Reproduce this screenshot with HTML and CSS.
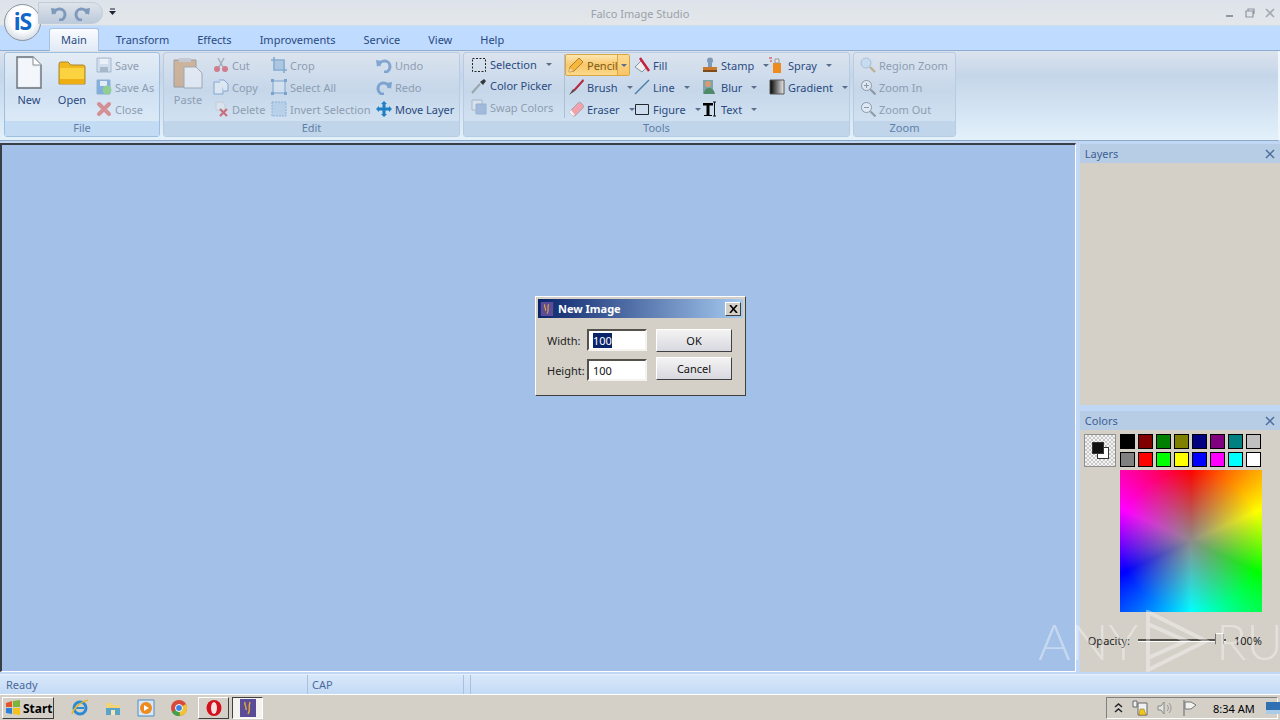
FILE: index.html
```html
<!DOCTYPE html>
<html lang="en">
<head>
  <meta charset="UTF-8" />
  <title>Falco Image Studio</title>
  <link rel="stylesheet" href="styles.css">
</head>
<body>
  <div class="window">
    <div class="titlebar">
      <span class="title-text">Falco Image Studio</span>
      <div class="win-btns">
        <svg width="12" height="12" viewBox="0 0 12 12"><path d="M2 9h7" stroke="#8f979f" stroke-width="2"/></svg>
        <svg width="12" height="12" viewBox="0 0 12 12"><path d="M2 4h7v6H2zM4 4V2h6v5" fill="none" stroke="#8f979f" stroke-width="1.2"/></svg>
        <svg width="12" height="12" viewBox="0 0 12 12"><path d="M2 2l8 8M10 2l-8 8" stroke="#a3aab1" stroke-width="1.6"/></svg>
      </div>
    </div>

    <div class="tabs">
      <span class="tab active">Main</span>
      <span class="tab">Transform</span>
      <span class="tab">Effects</span>
      <span class="tab">Improvements</span>
      <span class="tab">Service</span>
      <span class="tab">View</span>
      <span class="tab">Help</span>
    </div>

    <div class="ribbon">
      <section class="group file-group">
        <div class="group-body">
          <div class="large">
            <svg width="28" height="34" viewBox="0 0 28 34"><path d="M2 1h16l8 8v23H2z" fill="#e9eff6" stroke="#6b7078" stroke-width="1.4"/><path d="M18 1v8h8" fill="#fff" stroke="#8b9097"/><path d="M4 3h13v8h7v19H4z" fill="#f3f6fa"/></svg>
            <span>New</span>
          </div>
          <div class="large">
            <svg width="28" height="28" viewBox="0 0 28 28"><path d="M1 5a2 2 0 0 1 2-2h7l3 3h12a2 2 0 0 1 2 2v17H1z" fill="#f1b91d" stroke="#a9882f"/><path d="M2 9h24v15H2z" fill="#fbd23f"/><path d="M2 20h24v5H2z" fill="#efae12"/></svg>
            <span>Open</span>
          </div>
          <div class="col col-file off">
            <div class="item"><svg class="ic" viewBox="0 0 16 16"><path d="M1 1h14v14H1z" fill="#c8d6e8" stroke="#7e93ae"/><path d="M4 2h8v5H4z" fill="#f4f7fa"/><path d="M4 10h8v5H4z" fill="#7e93ae"/></svg><span>Save</span></div>
            <div class="item"><svg class="ic" viewBox="0 0 16 16"><path d="M1 1h13v14H1z" fill="#3f86cf" stroke="#5d84b3"/><path d="M4 2h7v5H4z" fill="#eef4fa"/><circle cx="11" cy="11" r="4.5" fill="#5cc048"/></svg><span>Save As</span></div>
            <div class="item"><svg class="ic" viewBox="0 0 16 16"><path d="M3 3l10 10M13 3L3 13" stroke="#d34a4a" stroke-width="4" stroke-linecap="round"/></svg><span>Close</span></div>
          </div>
        </div>
        <div class="group-label">File</div>
      </section>

      <section class="group edit-group">
        <div class="group-body">
          <div class="large off">
            <svg width="30" height="32" viewBox="0 0 30 32"><path d="M1 3h22v27H1z" fill="#c9905a" stroke="#6f6a63"/><path d="M6 1h12v4H6z" fill="#b4b9bf"/><path d="M11 10h12l6 6v15H11z" fill="#eef3f8" stroke="#7b8088"/></svg>
            <span>Paste</span>
          </div>
          <div class="col col-cut off">
            <div class="item"><svg class="ic" viewBox="0 0 16 16"><path d="M5 1l5 9M11 1L6 10" stroke="#7c8a99" stroke-width="1.5"/><circle cx="4" cy="12" r="3" fill="#d02f3c"/><circle cx="12" cy="12" r="3" fill="#d02f3c"/></svg><span>Cut</span></div>
            <div class="item"><svg class="ic" viewBox="0 0 16 16"><path d="M1 3h6l3 3v9H1z" fill="#eef3f8" stroke="#4d7dbd"/><path d="M6 1h5l4 4v7h-4" fill="#eef3f8" stroke="#4d7dbd"/></svg><span>Copy</span></div>
            <div class="item"><svg class="ic" viewBox="0 0 16 16"><path d="M3 1h7l2 3v5H3z" fill="#e4e9ee" stroke="#b9c1c9"/><path d="M7 8l7 7M14 8l-7 7" stroke="#c9141c" stroke-width="2.2"/></svg><span>Delete</span></div>
          </div>
          <div class="col col-crop off">
            <div class="item"><svg class="ic" viewBox="0 0 16 16"><path d="M3 0v13h13M0 3h13v13" fill="none" stroke="#3f7fb8" stroke-width="1.6"/><path d="M4 4h8v8H4z" fill="#8db3d8"/></svg><span>Crop</span></div>
            <div class="item"><svg class="ic" viewBox="0 0 16 16"><path d="M2 2h12v12H2z" fill="#d9e7f4" stroke="#3d76b3"/><path d="M0 0h3v3H0zM13 0h3v3h-3zM0 13h3v3H0zM13 13h3v3h-3z" fill="#3d76b3"/></svg><span>Select All</span></div>
            <div class="item"><svg class="ic" viewBox="0 0 16 16"><path d="M1 1h14v14H1z" fill="#a9c6e6" stroke="#5c8fc5" stroke-dasharray="2 1"/></svg><span>Invert Selection</span></div>
          </div>
          <div class="col off-some">
            <div class="item dim"><svg class="ic" viewBox="0 0 16 16"><path d="M3 9a5.5 5.5 0 1 1 5 6" fill="none" stroke="#3f78b8" stroke-width="3"/><path d="M0 3l6 1-5 6z" fill="#3f78b8"/></svg><span>Undo</span></div>
            <div class="item dim"><svg class="ic" viewBox="0 0 16 16"><path d="M13 9a5.5 5.5 0 1 0-5 6" fill="none" stroke="#3f78b8" stroke-width="3"/><path d="M16 3l-6 1 5 6z" fill="#3f78b8"/></svg><span>Redo</span></div>
            <div class="item"><svg class="ic" viewBox="0 0 16 16"><path d="M8 0l3 3H9.500v3.500H13V5l3 3-3 3V9.500H9.500V13H11l-3 3-3-3h1.500V9.500H3V11L0 8l3-3v1.500h3.500V3H5z" fill="#1f7fc4"/></svg><span>Move Layer</span></div>
          </div>
        </div>
        <div class="group-label">Edit</div>
      </section>

      <section class="group tools-group">
        <div class="group-body">
          <div class="col col-select">
            <div class="item"><svg class="ic" viewBox="0 0 16 16"><path d="M1.500 1.500h13v13h-13z" fill="none" stroke="#222" stroke-dasharray="2 1.500"/></svg><span>Selection</span><i class="caret"></i></div>
            <div class="item"><svg class="ic" viewBox="0 0 16 16"><path d="M1 15l8-9" stroke="#9aa3ab" stroke-width="2"/><path d="M9 4l3 3 3-4-2-2z" fill="#33383d"/></svg><span>Color Picker</span></div>
            <div class="item dim"><svg class="ic" viewBox="0 0 16 16"><path d="M1 1h10v10H1z" fill="#e4e8ec" stroke="#8f98a3"/><path d="M5 5h10v10H5z" fill="#7f9fcb" stroke="#6a8fc0"/></svg><span>Swap Colors</span></div>
          </div>
          <div class="col col-pencil">
            <div class="item selected">
              <svg class="ic" viewBox="0 0 16 16"><path d="M1 15l1-5L11 1l4 4-9 9z" fill="#f6b83c" stroke="#a0702a" stroke-width=".8"/><path d="M1 15l1-4 3 3z" fill="#f4dcb1"/></svg><span>Pencil</span><b class="split"><i class="caret"></i></b>
            </div>
            <div class="item"><svg class="ic" viewBox="0 0 16 16"><path d="M15 0L6 10l-1 1 2 1L16 2z" fill="#b5263a"/><path d="M1 16l4-6 2 2z" fill="#5b4a4a"/></svg><span>Brush</span><i class="caret"></i></div>
            <div class="item"><svg class="ic" viewBox="0 0 16 16"><path d="M1 11l9-9a2 2 0 0 1 3 0l2 2a2 2 0 0 1 0 3l-8 8H5z" fill="#f2a2ac" stroke="#a5a9ae"/><path d="M1 11l4 4 2-1-4-5z" fill="#f4f4f4"/></svg><span>Eraser</span><i class="caret"></i></div>
          </div>
          <div class="col col-fill">
            <div class="item"><svg class="ic" viewBox="0 0 16 16"><path d="M1 10l6-6 6 6-5 5z" fill="#eceff2" stroke="#8b929a"/><path d="M6 1l9 13" stroke="#c61f3a" stroke-width="2.400"/></svg><span>Fill</span></div>
            <div class="item"><svg class="ic" viewBox="0 0 16 16"><path d="M1 15L15 1" stroke="#4a7fa8" stroke-width="1.400"/></svg><span>Line</span><i class="caret"></i></div>
            <div class="item"><svg class="ic" viewBox="0 0 16 16"><path d="M1.500 3.500h13v10h-13z" fill="none" stroke="#22282e"/></svg><span>Figure</span><i class="caret"></i></div>
          </div>
          <div class="col col-stamp">
            <div class="item"><svg class="ic" viewBox="0 0 16 16"><circle cx="8" cy="3.500" r="3" fill="#7f99b8"/><path d="M6 6h4v4H6z" fill="#7f99b8"/><path d="M1 10h14v3H1z" fill="#cb7a2d"/><path d="M1 13h14v2H1z" fill="#7d4a1c"/></svg><span>Stamp</span><i class="caret"></i></div>
            <div class="item"><svg class="ic" viewBox="0 0 16 16"><path d="M1 1h10v14H1z" fill="#7da4a8"/><circle cx="6" cy="5" r="3" fill="#d99a72"/><path d="M2 15c0-5 3-6 5-6s5 1 6 6z" fill="#4f8a6a"/></svg><span>Blur</span><i class="caret"></i></div>
            <div class="item"><svg class="ic" viewBox="0 0 16 16"><path d="M1 2h10v2.500H7.500V14H10v1H2v-1h2.500V4.500H1z" fill="#000"/><path d="M11 1h3M12.500 1v14M11 15h3" stroke="#111" fill="none"/></svg><span>Text</span><i class="caret"></i></div>
          </div>
          <div class="col">
            <div class="item"><svg class="ic" viewBox="0 0 16 16"><path d="M4 6h8v10H4z" fill="#f08a1d"/><path d="M6 2h4v4H6z" fill="#e6e6e6" stroke="#999"/><path d="M0 1h3M1 4h2" stroke="#d0342c"/></svg><span>Spray</span><i class="caret"></i></div>
            <div class="item"><svg class="ic" viewBox="0 0 16 16"><defs><linearGradient id="grey-fade"><stop offset="0" stop-color="#000"/><stop offset="1" stop-color="#eee"/></linearGradient></defs><path d="M1 1h14v14H1z" fill="url(#grey-fade)" stroke="#555"/></svg><span>Gradient</span><i class="caret"></i></div>
          </div>
        </div>
        <div class="group-label">Tools</div>
      </section>

      <section class="group zoom-group">
        <div class="group-body">
          <div class="col off">
            <div class="item"><svg class="ic" viewBox="0 0 16 16"><circle cx="6" cy="6" r="5" fill="#bcd9f2" stroke="#7fa6c9"/><path d="M10 10l5 5" stroke="#b08a50" stroke-width="2.400"/></svg><span>Region Zoom</span></div>
            <div class="item"><svg class="ic" viewBox="0 0 16 16"><circle cx="6.500" cy="6.500" r="5" fill="#eef3f8" stroke="#59636e"/><path d="M4 6.500h5M6.500 4v5" stroke="#59636e"/><path d="M10.500 10.500l5 5" stroke="#59636e" stroke-width="2"/></svg><span>Zoom In</span></div>
            <div class="item"><svg class="ic" viewBox="0 0 16 16"><circle cx="6.500" cy="6.500" r="5" fill="#eef3f8" stroke="#59636e"/><path d="M4 6.500h5" stroke="#59636e"/><path d="M10.500 10.500l5 5" stroke="#59636e" stroke-width="2"/></svg><span>Zoom Out</span></div>
          </div>
        </div>
        <div class="group-label">Zoom</div>
      </section>
    </div>

    <div class="workspace">
      <div class="canvas"></div>
      <aside class="sidebar">
        <div class="panel layers-panel">
          <div class="panel-head"><span>Layers</span><svg width="10" height="10" viewBox="0 0 10 10"><path d="M1 1l8 8M9 1L1 9" stroke="#4d6f9b" stroke-width="1.500"/></svg></div>
          <div class="panel-body"></div>
        </div>
        <div class="panel colors-panel">
          <div class="panel-head"><span>Colors</span><svg width="10" height="10" viewBox="0 0 10 10"><path d="M1 1l8 8M9 1L1 9" stroke="#4d6f9b" stroke-width="1.500"/></svg></div>
          <div class="panel-body colors-body">
            <div class="color-top">
              <div class="preview"><i class="bg-swatch"></i><i class="fg-swatch"></i></div>
              <div class="color-main">
                <div class="palette">
                  <i class="swatch c-000"></i><i class="swatch c-800"></i><i class="swatch c-080"></i><i class="swatch c-880"></i><i class="swatch c-008"></i><i class="swatch c-808"></i><i class="swatch c-088"></i><i class="swatch c-ccc"></i>
                  <i class="swatch c-888"></i><i class="swatch c-f00"></i><i class="swatch c-0f0"></i><i class="swatch c-ff0"></i><i class="swatch c-00f"></i><i class="swatch c-f0f"></i><i class="swatch c-0ff"></i><i class="swatch c-fff"></i>
                </div>
                <div class="wheel"></div>
              </div>
            </div>
            <div class="opacity-row">
              <span>Opacity:</span>
              <div class="slider"><i class="thumb"></i></div>
              <span>100%</span>
            </div>
          </div>
        </div>
      </aside>
    </div>

    <div class="statusbar">
      <span class="cell cell-ready">Ready</span>
      <span class="cell cell-cap">CAP</span>
      <span class="cell"></span>
    </div>
  </div>

  <div class="taskbar">
    <button class="start-btn">
      <svg width="16" height="16" viewBox="0 0 16 16"><path d="M1 3l6-2v6H1z" fill="#e8542a"/><path d="M8 1l7-1v7H8z" fill="#7cb53a"/><path d="M1 8h6v6l-6-1z" fill="#2f80d8"/><path d="M8 8h7v7l-7-1z" fill="#f5c21c"/></svg>
      Start
    </button>
    <div class="quick">
      <svg width="18" height="18" viewBox="0 0 18 18"><circle cx="9" cy="9" r="6" fill="none" stroke="#2a8ad4" stroke-width="3"/><path d="M5 9h8" stroke="#2a8ad4" stroke-width="2"/><path d="M1 15C3 8 10 3 17 1" fill="none" stroke="#e6b52c" stroke-width="1.500"/></svg>
      <svg width="18" height="18" viewBox="0 0 18 18"><path d="M2 4h5l2 2h7v10H2z" fill="#f2d377"/><path d="M2 9h14v7H2z" fill="#5aa3c9"/><path d="M7 11h4v5H7z" fill="#f4e6b4"/></svg>
      <svg width="18" height="18" viewBox="0 0 18 18"><path d="M1 1h16v16H1z" fill="#d8e8f5" stroke="#4c8cc6"/><circle cx="9" cy="9" r="6" fill="#ee8a1e"/><path d="M7 6l5 3-5 3z" fill="#fff"/></svg>
      <svg width="18" height="18" viewBox="0 0 18 18"><circle cx="9" cy="9" r="8" fill="#d94a3a"/><path d="M9 9L2 13a8 8 0 0 0 8 4z" fill="#3fa34d"/><path d="M9 9l1 8a8 8 0 0 0 6-12z" fill="#f2c230"/><circle cx="9" cy="9" r="3.500" fill="#3f83e0" stroke="#fff"/></svg>
    </div>
    <div class="task-btn">
      <svg width="18" height="18" viewBox="0 0 18 18"><ellipse cx="9" cy="9" rx="7.500" ry="8" fill="#d5101c"/><ellipse cx="9" cy="9" rx="3" ry="6" fill="#f6e0e0"/></svg>
    </div>
    <div class="task-btn pressed">
      <svg width="16" height="18" viewBox="0 0 16 18"><path d="M0 0h16v18H0z" fill="#5a4c96"/><path d="M5 3c-1 4 2 4 1 8M10 3c-2 5 1 8-2 12" fill="none" stroke="#e0a73c" stroke-width="1.500"/></svg>
    </div>
    <div class="tray">
      <svg width="9" height="10" viewBox="0 0 9 10"><path d="M1 4l3.500-3L8 4M1 9l3.500-3L8 9" fill="none" stroke="#222" stroke-width="1.400"/></svg>
      <svg width="16" height="16" viewBox="0 0 16 16"><path d="M1 1h4v6H1zM6 3h9v12H6z" fill="#eef0f2" stroke="#666"/><path d="M8 9l4-0 2 6H7z" fill="#f0c51e" stroke="#8b6f0c" stroke-width=".5"/></svg>
      <svg width="16" height="16" viewBox="0 0 16 16"><path d="M1 6h3l3-4v12l-3-4H1z" fill="#e4e4e2" stroke="#888"/><path d="M10 5a4 4 0 0 1 0 6M12 3a7 7 0 0 1 0 10" fill="none" stroke="#999"/></svg>
      <svg width="16" height="16" viewBox="0 0 16 16"><path d="M2 0v16" stroke="#666"/><path d="M3 2h6l5 3-5 4H3z" fill="#f1f1ef" stroke="#777"/></svg>
      <span class="clock">8:34 AM</span>
      <svg class="show-desktop" width="15" height="12" viewBox="0 0 15 12"><path d="M0 0h15v12H0z" fill="#2f6fb4"/><path d="M0 8h15v4H0z" fill="#a9cbe8"/></svg>
    </div>
  </div>

  <!-- things on top of the window -->
  <div class="orb">iS</div>
  <div class="qat">
    <svg width="18" height="16" viewBox="0 0 16 16"><path d="M3 9a5.500 5.500 0 1 1 5 6" fill="none" stroke="#7d99bb" stroke-width="3"/><path d="M0 3l6 1-5 6z" fill="#7d99bb"/></svg>
    <svg width="18" height="16" viewBox="0 0 16 16"><path d="M13 9a5.500 5.500 0 1 0-5 6" fill="none" stroke="#7d99bb" stroke-width="3"/><path d="M16 3l-6 1 5 6z" fill="#7d99bb"/></svg>
  </div>
  <svg class="qat-menu" width="7" height="8" viewBox="0 0 7 8"><path d="M1 1h5" stroke="#223" /><path d="M0 3h7L3.500 7z" fill="#223"/></svg>

  <div class="dialog">
    <div class="dlg-title">
      <svg width="14" height="14" viewBox="0 0 16 18"><path d="M0 0h16v18H0z" fill="#5a4c96"/><path d="M5 3c-1 4 2 4 1 8M10 3c-2 5 1 8-2 12" fill="none" stroke="#e0a73c" stroke-width="1.500"/></svg>
      <span>New Image</span>
      <b class="dlg-close"><svg width="9" height="8" viewBox="0 0 9 8"><path d="M1 0l7 8M8 0L1 8" stroke="#000" stroke-width="1.600"/></svg></b>
    </div>
    <div class="dlg-body">
      <div class="dlg-fields">
        <label class="dlg-field"><span>Width:</span><div class="dlg-input"><mark>100</mark></div></label>
        <label class="dlg-field"><span>Height:</span><div class="dlg-input">100</div></label>
      </div>
      <div class="dlg-buttons">
        <button class="dlg-btn">OK</button>
        <button class="dlg-btn">Cancel</button>
      </div>
    </div>
  </div>

  <div class="watermark">
    <span>ANY</span>
    <svg width="70" height="62" viewBox="0 0 70 62"><path d="M6 2L64 31 6 60zM6 14l38 17L6 48" fill="none" stroke="#fff" stroke-width="4"/></svg>
    <span>RUN</span>
  </div>
</body>
</html>
```

FILE: styles.css
```css
* {
  box-sizing: border-box;
}
html, body {
  margin: 0;
  padding: 0;
}
body {
  width: 1280px;
  height: 720px;
  overflow: hidden;
  position: relative;
  font-family: "Noto Sans", "Open Sans", sans-serif;
  font-size: 11px;
  color: #2a4a7f;
  background: #d4d0c8;
}
svg {
  display: block;
  flex: none;
}

/* window */
.window {
  height: 694px;
  display: flex;
  flex-direction: column;
  background: #bfdbff;
}
.titlebar {
  height: 26px;
  display: flex;
  align-items: center;
  justify-content: center;
  position: relative;
  background: linear-gradient(#dde3ea, #e3e7ea);
  border-bottom: 1px solid #cfdcea;
}
.title-text {
  color: #9ba1a8;
  margin-top: 2px;
}
.win-btns {
  position: absolute;
  right: 4px;
  top: 7px;
  display: flex;
  gap: 8px;
}

/* tabs */
.tabs {
  height: 25px;
  padding: 2px 0 0 46px;
  display: flex;
  background: #bfdbff;
  border-bottom: 1px solid #8eabd0;
}
.tab {
  padding: 0 14px;
  line-height: 24px;
  color: #2a4a7f;
}
.tab.active {
  margin: 0 3px;
  padding: 0 11px;
  height: 24px;
  background: linear-gradient(#fafcff, #dfe9f5);
  border: 1px solid #a9c1de;
  border-bottom: none;
  border-radius: 3px 3px 0 0;
  line-height: 22px;
}

/* ribbon */
.ribbon {
  height: 90px;
  padding: 1px 0 0 4px;
  display: flex;
  gap: 3px;
  background: linear-gradient(#dbe2ed, #c5d6e9 28%, #d2e2f2 62%, #e2f1fa);
  border-bottom: 1px solid #8fa9c7;
  border-right: 2px solid #eef5fb;
}
.group {
  height: 85px;
  display: flex;
  flex-direction: column;
  border: 1px solid #b7cbe2;
  border-radius: 3px;
  background: linear-gradient(#dbe3ee, #c6d7ea 45%, #d6e6f5);
}
.file-group {
  width: 156px;
  border-color: #9fbfdf;
  background: linear-gradient(#e4ecf5, #cfe0f2 45%, #e2eef9);
}
.edit-group {
  width: 297px;
}
.tools-group {
  width: 387px;
}
.zoom-group {
  width: 103px;
}
.group-body {
  height: 68px;
  padding: 1px 0 0 3px;
  display: flex;
}
.edit-group .group-body {
  padding-left: 3px;
}
.tools-group .group-body {
  padding-left: 7px;
}
.zoom-group .group-body {
  padding-left: 6px;
}
.group-label {
  height: 15px;
  line-height: 14px;
  text-align: center;
  color: #5f7fa8;
  background: #c0d5ea;
}
.file-group .group-label {
  background: #c3dbf3;
}

.large {
  width: 42px;
  padding-top: 2px;
  display: flex;
  flex-direction: column;
  align-items: center;
}
.large svg {
  height: 34px;
}
.large span {
  margin-top: 1px;
  line-height: 18px;
  color: #2a4a7f;
}
.large + .large {
  margin-left: 1px;
}
.large.off span {
  color: #8d9db1;
}
.large.off svg {
  opacity: .55;
}
.col {
  display: flex;
  flex-direction: column;
}
.col-file {
  margin-left: 3px;
}
.col-cut {
  width: 58px;
  margin-left: 4px;
}
.col-crop {
  width: 105px;
}
.col-select {
  width: 94px;
  margin-right: 0;
  border-right: 1px solid #aebfd2;
  height: 64px;
}
.col-pencil {
  width: 69px;
}
.col-fill {
  width: 68px;
}
.col-stamp {
  width: 67px;
}
.item {
  height: 22px;
  display: flex;
  align-items: center;
  gap: 3px;
  white-space: nowrap;
  color: #2a4a7f;
}
.ic {
  width: 16px;
  height: 16px;
}
.off .item, .item.dim {
  color: #8d9db1;
}
.off .ic, .item.dim .ic {
  opacity: .55;
}
.caret {
  width: 0;
  height: 0;
  margin-left: 6px;
  border: 3px solid transparent;
  border-top: 3px solid #5a6f8c;
  border-bottom: none;
}
.col-pencil .item {
  padding-left: 3px;
}
.item.selected {
  width: 65px;
  border: 1px solid #d9a63f;
  border-radius: 2px;
  padding-left: 2px;
  color: #7a5c22;
  background: linear-gradient(#fce7b2, #f9c76a 50%, #fbd98a);
  position: relative;
  overflow: hidden;
}
.split {
  position: absolute;
  right: 0;
  top: 0;
  bottom: 0;
  width: 12px;
  display: flex;
  align-items: center;
  justify-content: center;
  border-left: 1px solid #d9a63f;
  background: linear-gradient(#fbdc96, #f8c465);
}
.split .caret {
  margin: 0;
}

/* canvas and panels */
.workspace {
  flex: 1;
  min-height: 0;
  padding-top: 2px;
  display: flex;
  background: #c0d8f5;
}
.canvas {
  width: 1076px;
  margin-bottom: 2px;
  background: #a3c1e8;
  border: 2px solid #3a3f46;
  border-width: 2px 0 0 2px;
  border-right: 1px solid #fff;
  border-bottom: 1px solid #fff;
}
.sidebar {
  flex: 1;
  padding: 1px 0 2px 4px;
  display: flex;
  flex-direction: column;
  gap: 6px;
}
.panel {
  display: flex;
  flex-direction: column;
}
.layers-panel {
  height: 261px;
}
.colors-panel {
  flex: 1;
}
.panel-head {
  height: 19px;
  flex: none;
  padding: 0 5px;
  display: flex;
  align-items: center;
  justify-content: space-between;
  color: #3d5f94;
  background: #b7cde6;
}
.panel-body {
  flex: 1;
  background: #d4d0c8;
}
.colors-body {
  padding: 4px 18px 0 4px;
  color: #222;
}
.color-top {
  display: flex;
  gap: 4px;
}
.preview {
  width: 32px;
  height: 33px;
  position: relative;
  border: 1px solid #8f8f8f;
  background: repeating-conic-gradient(#c8c8c8 0 25%, #f4f4f4 0 50%) 0 0 / 4px 4px;
}
.fg-swatch, .bg-swatch {
  position: absolute;
  width: 12px;
  height: 12px;
  border: 1px solid #333;
}
.fg-swatch {
  left: 7px;
  top: 7px;
  background: #111;
}
.bg-swatch {
  left: 12px;
  top: 12px;
  background: #fff;
}
.palette {
  display: grid;
  grid-template-columns: repeat(8, 15px);
  grid-auto-rows: 15px;
  gap: 3px;
}
.swatch {
  border: 1px solid #000;
}
.c-000 { background: #000; }
.c-800 { background: #800000; }
.c-080 { background: #008000; }
.c-880 { background: #808000; }
.c-008 { background: #000080; }
.c-808 { background: #800080; }
.c-088 { background: #008080; }
.c-ccc { background: #c0c0c0; }
.c-888 { background: #808080; }
.c-f00 { background: #f00; }
.c-0f0 { background: #0f0; }
.c-ff0 { background: #ff0; }
.c-00f { background: #00f; }
.c-f0f { background: #f0f; }
.c-0ff { background: #0ff; }
.c-fff { background: #fff; }
.wheel {
  width: 142px;
  height: 142px;
  margin-top: 3px;
  background:
    radial-gradient(circle closest-side, #8c8c8c 0, rgba(140, 140, 140, .55) 45%, rgba(140, 140, 140, 0) 100%),
    conic-gradient(#f00 0deg, #ff0 66deg, #0f0 115deg, #0ff 180deg, #00f 245deg, #f0f 295deg, #f00 360deg);
}
.opacity-row {
  margin-top: 19px;
  padding-left: 4px;
  display: flex;
  align-items: center;
  gap: 8px;
  height: 18px;
}
.slider {
  width: 88px;
  height: 3px;
  position: relative;
  background: #55524c;
  border-bottom: 1px solid #fff;
}
.thumb {
  position: absolute;
  right: 2px;
  top: -6px;
  width: 9px;
  height: 18px;
  background: #d4d0c8;
  border: 1px solid #777;
  border-top-color: #fff;
  clip-path: polygon(0 0, 100% 0, 100% 60%, 50% 100%, 0 60%);
}

/* status bar */
.statusbar {
  height: 20px;
  flex: none;
  display: flex;
  line-height: 20px;
  color: #4a6a9a;
  background: linear-gradient(#d9e8fa, #c3daf5);
  border-top: 1px solid #e6f0fb;
}
.cell {
  padding-left: 6px;
  border-right: 1px solid #a9c1de;
}
.cell-ready {
  width: 308px;
}
.cell-cap {
  width: 156px;
  padding-left: 4px;
}

/* taskbar */
.taskbar {
  height: 26px;
  padding: 2px 2px 0 2px;
  display: flex;
  align-items: flex-start;
  background: #d4d0c8;
  border-top: 1px solid #fff;
}
.start-btn {
  width: 52px;
  height: 22px;
  padding: 0 0 0 2px;
  display: flex;
  align-items: center;
  gap: 2px;
  font-family: "Noto Sans", sans-serif;
  font-weight: bold;
  font-size: 12px;
  color: #000;
  background: #d4d0c8;
  border: 1px solid;
  border-color: #fff #404040 #404040 #fff;
}
.quick {
  width: 144px;
  padding: 2px 0 0 17px;
  display: flex;
  gap: 15px;
}
.task-btn {
  width: 31px;
  height: 22px;
  margin-right: 3px;
  display: flex;
  align-items: center;
  justify-content: center;
  background: #d4d0c8;
  border: 1px solid;
  border-color: #fff #404040 #404040 #fff;
}
.task-btn.pressed {
  border-color: #404040 #fff #fff #404040;
  background: #f4f3f0;
}
.tray {
  width: 172px;
  height: 22px;
  margin-left: auto;
  padding: 0 4px 0 7px;
  display: flex;
  align-items: center;
  gap: 9px;
  color: #000;
  border: 1px solid;
  border-color: #808080 #fff #fff #808080;
}
.clock {
  margin-left: 6px;
  white-space: nowrap;
}
.show-desktop {
  margin-left: 2px;
}

/* on top of the window */
.orb {
  position: absolute;
  left: 4px;
  top: 4px;
  width: 37px;
  height: 37px;
  border-radius: 50%;
  text-align: center;
  line-height: 33px;
  font-size: 23px;
  font-weight: bold;
  letter-spacing: -1px;
  color: #1266c9;
  background: radial-gradient(circle at 50% 40%, #fff 45%, #d8dfe8 75%, #a9b2bd);
  border: 1px solid #8c949e;
}
.qat {
  position: absolute;
  left: 38px;
  top: 2px;
  width: 65px;
  height: 22px;
  padding-left: 11px;
  display: flex;
  align-items: center;
  gap: 5px;
  border-radius: 0 11px 11px 0;
  background: linear-gradient(#dfe4ea, #bccadb);
  border: 1px solid #c2cdda;
}
.qat-menu {
  position: absolute;
  left: 109px;
  top: 8px;
}

.dialog {
  position: absolute;
  left: 535px;
  top: 296px;
  width: 211px;
  height: 100px;
  padding: 2px;
  background: #d4d0c8;
  border: 1px solid;
  border-color: #fff #404040 #404040 #fff;
  color: #222;
}
.dlg-title {
  height: 19px;
  padding: 0 2px;
  display: flex;
  align-items: center;
  gap: 4px;
  font-weight: bold;
  color: #fff;
  background: linear-gradient(90deg, #0a246a, #a6caf0);
}
.dlg-close {
  width: 16px;
  height: 14px;
  margin-left: auto;
  display: flex;
  align-items: center;
  justify-content: center;
  background: #d4d0c8;
  border: 1px solid;
  border-color: #fff #404040 #404040 #fff;
}
.dlg-body {
  padding: 11px 11px 0 9px;
  display: flex;
  justify-content: space-between;
}
.dlg-fields {
  display: flex;
  flex-direction: column;
  gap: 8px;
}
.dlg-field {
  display: flex;
  align-items: center;
  justify-content: space-between;
  width: 100px;
}
.dlg-input {
  width: 60px;
  height: 22px;
  padding-left: 4px;
  line-height: 19px;
  background: #fff;
  color: #111;
  border: 2px solid;
  border-color: #55524c #f4f3f0 #f4f3f0 #55524c;
}
mark {
  color: #fff;
  background: #0a246a;
}
.dlg-buttons {
  display: flex;
  flex-direction: column;
  gap: 5px;
}
.dlg-btn {
  width: 76px;
  height: 23px;
  padding: 0;
  font-family: "Noto Sans", sans-serif;
  font-size: 11px;
  color: #111;
  background: linear-gradient(#f4f3f3, #d8d8e0);
  border: 1px solid;
  border-color: #fff #404040 #404040 #fff;
}

.watermark {
  position: absolute;
  left: 1038px;
  top: 610px;
  display: flex;
  align-items: center;
  gap: 4px;
  font-family: "Lato", sans-serif;
  font-weight: 300;
  font-size: 50px;
  color: #fff;
  opacity: .38;
  pointer-events: none;
}
```
